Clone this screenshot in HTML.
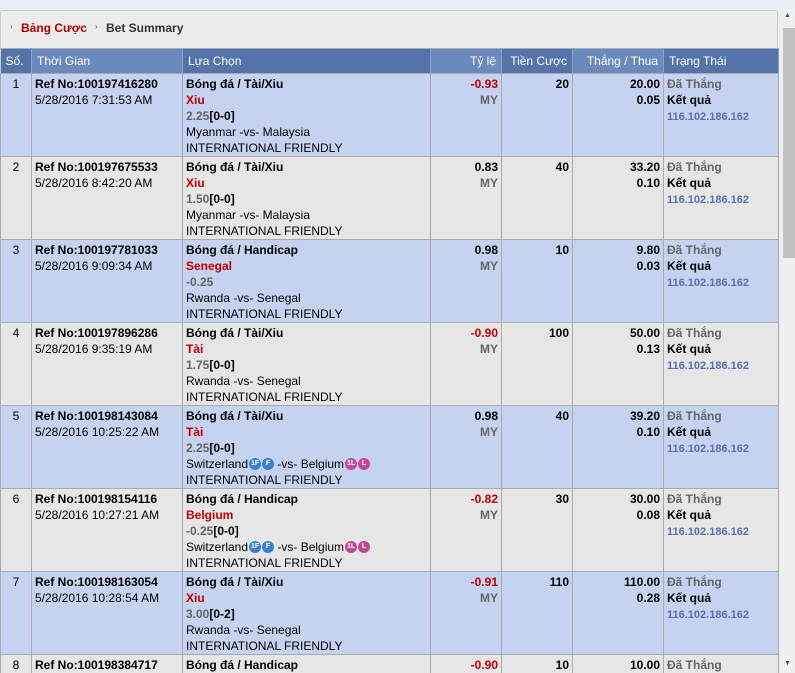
<!DOCTYPE html>
<html><head><meta charset="utf-8"><style>
*{margin:0;padding:0;box-sizing:border-box}
html,body{width:795px;height:673px;overflow:hidden}
body{background:#e9eef4;font-family:Tahoma,"Liberation Sans",sans-serif;font-size:12px;color:#000;position:relative}
.panel{position:absolute;left:0;top:10px;width:778px;height:663px;background:#ececec;border:1px solid #ccc;border-radius:3px}
.bc{position:absolute;top:21px;font-size:12px;font-weight:bold}
.arr{position:absolute;top:22px;font-size:8px;color:#555}
table{position:absolute;left:0;top:48px;width:778px;border-collapse:collapse;table-layout:fixed}
th{height:25px;color:#fff;font-weight:normal;text-align:left;padding:0 5px;background:#5473a8;border-right:1px solid #8da3c8;border-top:1px solid #aab}
th.l{background:#6a89bd}
td{height:83px;vertical-align:top;padding:2px 3px 0;border:1px solid #aaa;line-height:16px;overflow:hidden}
tr.last td{height:18px;border-bottom:none}
td.c{text-align:center}
tr.o td{background:#c5d3f0}
tr.e td{background:#e6e6e6}
.r{text-align:right}
.b{font-weight:bold}
.red{color:#c00000;font-weight:bold}
.g{color:#666;font-weight:bold}
.ip{color:#5a6fb0;font-weight:bold;font-size:11px}
.ic{display:inline-block;width:12px;height:12px;border-radius:50%;color:#fff;font-size:7px;font-weight:bold;text-align:center;line-height:12px;vertical-align:top;margin-top:2px;margin-left:1px}
.bl{background:#3a7fd0}.pk{background:#c0489a}
.sb{position:absolute;left:781px;top:10px;width:14px;height:663px;background:#f0f0f0}
.th{position:absolute;left:783px;top:28px;width:12px;height:230px;background:#c1c1c1}
</style></head><body>
<div class="panel"></div>
<span class="arr" style="left:10px">›</span><span class="bc" style="left:21px;color:#b00000">Bảng Cược</span>
<span class="arr" style="left:95px">›</span><span class="bc" style="left:106px;color:#333">Bet Summary</span>
<table>
<colgroup><col style="width:31px"><col style="width:151px"><col style="width:248px"><col style="width:71px"><col style="width:71px"><col style="width:91px"><col style="width:115px"></colgroup>
<tr><th>Số.</th><th class="l">Thời Gian</th><th>Lựa Chọn</th><th class="l r">Tỷ lệ</th><th class="r">Tiền Cược</th><th class="l r">Thắng / Thua</th><th>Trạng Thái</th></tr>
<tr class="o"><td class="c">1</td><td><b>Ref No:100197416280</b><br>5/28/2016 7:31:53 AM</td><td><b>Bóng đá / Tài/Xiu</b><br><span class="red">Xiu</span><br><span class="g">2.25</span><b>[0-0]</b><br>Myanmar -vs- Malaysia<br>INTERNATIONAL FRIENDLY</td><td class="r"><span class="red">-0.93</span><br><span class="g">MY</span></td><td class="r b">20</td><td class="r b">20.00<br>0.05</td><td><span class="g">Đã Thắng</span><br><b>Kết quả</b><br><span class="ip">116.102.186.162</span></td></tr>
<tr class="e"><td class="c">2</td><td><b>Ref No:100197675533</b><br>5/28/2016 8:42:20 AM</td><td><b>Bóng đá / Tài/Xiu</b><br><span class="red">Xiu</span><br><span class="g">1.50</span><b>[0-0]</b><br>Myanmar -vs- Malaysia<br>INTERNATIONAL FRIENDLY</td><td class="r"><b>0.83</b><br><span class="g">MY</span></td><td class="r b">40</td><td class="r b">33.20<br>0.10</td><td><span class="g">Đã Thắng</span><br><b>Kết quả</b><br><span class="ip">116.102.186.162</span></td></tr>
<tr class="o"><td class="c">3</td><td><b>Ref No:100197781033</b><br>5/28/2016 9:09:34 AM</td><td><b>Bóng đá / Handicap</b><br><span class="red">Senegal</span><br><span class="g">-0.25</span><br>Rwanda -vs- Senegal<br>INTERNATIONAL FRIENDLY</td><td class="r"><b>0.98</b><br><span class="g">MY</span></td><td class="r b">10</td><td class="r b">9.80<br>0.03</td><td><span class="g">Đã Thắng</span><br><b>Kết quả</b><br><span class="ip">116.102.186.162</span></td></tr>
<tr class="e"><td class="c">4</td><td><b>Ref No:100197896286</b><br>5/28/2016 9:35:19 AM</td><td><b>Bóng đá / Tài/Xiu</b><br><span class="red">Tài</span><br><span class="g">1.75</span><b>[0-0]</b><br>Rwanda -vs- Senegal<br>INTERNATIONAL FRIENDLY</td><td class="r"><span class="red">-0.90</span><br><span class="g">MY</span></td><td class="r b">100</td><td class="r b">50.00<br>0.13</td><td><span class="g">Đã Thắng</span><br><b>Kết quả</b><br><span class="ip">116.102.186.162</span></td></tr>
<tr class="o"><td class="c">5</td><td><b>Ref No:100198143084</b><br>5/28/2016 10:25:22 AM</td><td><b>Bóng đá / Tài/Xiu</b><br><span class="red">Tài</span><br><span class="g">2.25</span><b>[0-0]</b><br>Switzerland<span class="ic bl">1F</span><span class="ic bl">F</span> -vs- Belgium<span class="ic pk">1L</span><span class="ic pk">L</span><br>INTERNATIONAL FRIENDLY</td><td class="r"><b>0.98</b><br><span class="g">MY</span></td><td class="r b">40</td><td class="r b">39.20<br>0.10</td><td><span class="g">Đã Thắng</span><br><b>Kết quả</b><br><span class="ip">116.102.186.162</span></td></tr>
<tr class="e"><td class="c">6</td><td><b>Ref No:100198154116</b><br>5/28/2016 10:27:21 AM</td><td><b>Bóng đá / Handicap</b><br><span class="red">Belgium</span><br><span class="g">-0.25</span><b>[0-0]</b><br>Switzerland<span class="ic bl">1F</span><span class="ic bl">F</span> -vs- Belgium<span class="ic pk">1L</span><span class="ic pk">L</span><br>INTERNATIONAL FRIENDLY</td><td class="r"><span class="red">-0.82</span><br><span class="g">MY</span></td><td class="r b">30</td><td class="r b">30.00<br>0.08</td><td><span class="g">Đã Thắng</span><br><b>Kết quả</b><br><span class="ip">116.102.186.162</span></td></tr>
<tr class="o"><td class="c">7</td><td><b>Ref No:100198163054</b><br>5/28/2016 10:28:54 AM</td><td><b>Bóng đá / Tài/Xiu</b><br><span class="red">Xiu</span><br><span class="g">3.00</span><b>[0-2]</b><br>Rwanda -vs- Senegal<br>INTERNATIONAL FRIENDLY</td><td class="r"><span class="red">-0.91</span><br><span class="g">MY</span></td><td class="r b">110</td><td class="r b">110.00<br>0.28</td><td><span class="g">Đã Thắng</span><br><b>Kết quả</b><br><span class="ip">116.102.186.162</span></td></tr>
<tr class="e last"><td class="c">8</td><td><b>Ref No:100198384717</b></td><td><b>Bóng đá / Handicap</b></td><td class="r"><span class="red">-0.90</span></td><td class="r b">10</td><td class="r b">10.00</td><td><span class="g">Đã Thắng</span></td></tr>
</table>
<div class="sb"></div><div class="th"></div>
<div style="position:absolute;left:784px;top:12px;font-size:7px;color:#555">▲</div>
<div style="position:absolute;left:784px;top:660px;font-size:7px;color:#555">▼</div>
</body></html>
